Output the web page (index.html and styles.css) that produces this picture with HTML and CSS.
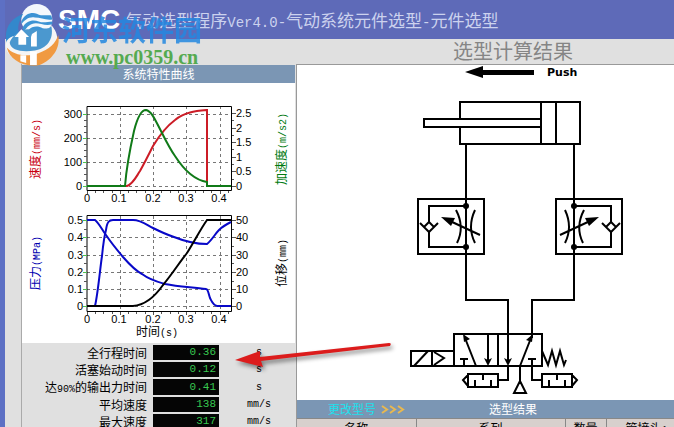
FILE: index.html
```html
<!DOCTYPE html>
<html lang="zh-CN">
<head>
<meta charset="utf-8">
<title>气动选型程序Ver4.0</title>
<link rel="stylesheet" href="styles.css">
</head>
<body>
<div class="app">
  <header class="topbar">
    <div class="brand">SMC</div>
    <h1 class="title">气动选型程序<span class="latin">Ver4.0-</span>气动系统元件选型<span class="latin">-</span>元件选型</h1>
  </header>
  <h2 class="subtitle">选型计算结果</h2>
  <main class="columns">
    <section class="curves">
      <h3 class="bar">系统特性曲线</h3>
      <svg class="charts" viewBox="22 82 273 260" width="273" height="260" role="img" aria-label="系统特性曲线">
        <g class="grid">
          <path d="M120 105V189M153 105V189M186 105V189M220 105V189M87 113H231M87 137H231M87 161H231M87 185H231"/>
          <path d="M120 215V310M153 215V310M186 215V310M220 215V310M87 219H231M87 236H231M87 254H231M87 271H231M87 288H231M87 305H231"/>
        </g>
        <path class="frame" d="M87 105.500H231.500V189.500H87ZM87 214.500H231.500V310.500H87Z"/>
        <path class="tick" d="M83 113H87M83 137H87M83 161H87M83 185H87M83 219H87M83 236H87M83 254H87M83 271H87M83 288H87M83 305H87"/>
        <path class="minor" d="M84 119H87M84 125H87M84 131H87M84 143H87M84 149H87M84 155H87M84 167H87M84 173H87M84 179H87M232 112H236M232 127H236M232 141H236M232 156H236M232 170H236M232 185H236M232 119H234M232 134H234M232 148H234M232 163H234M232 178H234M232 219H236M232 236H236M232 254H236M232 271H236M232 288H236M232 305H236M232 228H234M232 245H234M232 262H234M232 280H234M232 297H234M84 228H87M84 245H87M84 262H87M84 280H87M84 297H87"/>
        <path class="minor" d="M87 190V193M95 190V192M103 190V192M112 190V192M120 190V193M128 190V192M136 190V192M145 190V192M153 190V193M161 190V192M170 190V192M178 190V192M186 190V193M195 190V192M203 190V192M211 190V192M220 190V193M228 190V192M87 311V314M95 311V313M103 311V313M112 311V313M120 311V314M128 311V313M136 311V313M145 311V313M153 311V314M161 311V313M170 311V313M178 311V313M186 311V314M195 311V313M203 311V313M211 311V313M220 311V314M228 311V313"/>
        <path class="curve red" d="M87 185H127C133 183 136 176 140 170C145 161 149 153 153 145C159 135 167 125 175 119C184 111 196 110 207 109V185"/>
        <path class="curve green" d="M87 185H125C126 172 130 148 134 130C137 118 141 109 146 109C152 110 156 121 162 132C166 140 170 148 175 155C184 169 194 179 207 181V185H231"/>
        <path class="curve blue" d="M87 219H95C99 222 102 229 106 234C112 243 118 250 123 256C130 264 136 270 142 273C150 279 158 281 165 283C180 286 194 286 206 288C208 288 208 291 210 297C212 301 213 304 217 305H231"/>
        <path class="curve blue" d="M95 305C98 292 100 268 102 255C103 245 104 236 106 229C107 221 109 219 113 219H133C141 219 147 224 153 227C161 231 168 234 174 236C184 240 194 243 207 243C212 239 215 233 219 229C223 225 227 223 231 221"/>
        <path class="curve black" d="M87 305H133C147 304 156 294 163 284C173 272 179 262 187 252C194 241 200 229 207 219H231"/>
        <g class="num end">
          <text x="82" y="117">300</text><text x="82" y="141">200</text><text x="82" y="165">100</text><text x="82" y="189">0</text>
          <text x="83" y="223">0.5</text><text x="83" y="240">0.4</text><text x="83" y="258">0.3</text><text x="83" y="275">0.2</text><text x="83" y="292">0.1</text><text x="83" y="309">0</text>
        </g>
        <g class="num">
          <text x="236" y="116">2.5</text><text x="236" y="131">2</text><text x="236" y="145">1.5</text><text x="236" y="160">1</text><text x="236" y="174">0.5</text><text x="236" y="189">0</text>
          <text x="236" y="223">50</text><text x="236" y="240">40</text><text x="236" y="258">30</text><text x="236" y="275">20</text><text x="236" y="292">10</text><text x="236" y="309">0</text>
        </g>
        <g class="num mid">
          <text x="87" y="201">0</text><text x="119" y="201">0.1</text><text x="153" y="201">0.2</text><text x="186" y="201">0.3</text><text x="219" y="201">0.4</text>
          <text x="87" y="322">0</text><text x="119" y="322">0.1</text><text x="153" y="322">0.2</text><text x="186" y="322">0.3</text><text x="219" y="322">0.4</text>
        </g>
        <g class="axis mid">
          <text class="t-red" transform="translate(40 148) rotate(-90)">速度<tspan class="latin">(mm/s)</tspan></text>
          <text class="t-green" transform="translate(286 148) rotate(-90)">加速度<tspan class="latin">(m/s2)</tspan></text>
          <text class="t-blue" transform="translate(40 262) rotate(-90)">压力<tspan class="latin">(MPa)</tspan></text>
          <text transform="translate(286 262) rotate(-90)">位移<tspan class="latin">(mm)</tspan></text>
          <text x="157" y="335">时间<tspan class="latin">(s)</tspan></text>
        </g>
      </svg>
      <table class="stats">
        <tr><th scope="row">全行程时间</th><td class="value">0.36</td><td class="unit">s</td></tr>
        <tr><th scope="row">活塞始动时间</th><td class="value">0.12</td><td class="unit">s</td></tr>
        <tr><th scope="row">达<span class="latin">90%</span>的输出力时间</th><td class="value">0.41</td><td class="unit">s</td></tr>
        <tr><th scope="row">平均速度</th><td class="value">138</td><td class="unit">mm/s</td></tr>
        <tr><th scope="row">最大速度</th><td class="value">317</td><td class="unit">mm/s</td></tr>
      </table>
    </section>
    <section class="result">
      <svg class="circuit" viewBox="297 65 377 335" width="377" height="335" role="img" aria-label="气动回路图">
        <path class="solid" d="M465 72L483 66V70H534V75H483V78Z"/>
        <text class="push" x="547" y="76">Push</text>
        <path d="M460 119V102H580V144H460V127M541 102V144M556 102V144M541 119H424V127H541"/>
        <path d="M466 144V300H508V363M574 144V300H532V338"/>
        <g id="throttle">
          <path d="M418 199H484V254H418ZM466 206H429V222M429 232V247H466"/>
          <path d="M429 222L434 227L429 232L424 227ZM420 223L426 229M438 223L432 229M456 210Q465 227 457 243M475 210Q467 227 475 243M480 235L450 221"/>
          <path class="solid" d="M441 217L455 218L451 226Z"/>
          <circle class="solid" cx="466" cy="206" r="3"/><circle class="solid" cx="466" cy="247" r="3"/>
        </g>
        <use href="#throttle" transform="translate(1040 0) scale(-1 1)"/>
        <path d="M454 334H542V366H454ZM498 334V366M488 334V363M476 366L465 338M520 366L531 338M460 359H468M464 359V366M528 359H536M532 359V380H542"/>
        <path class="solid" d="M463 334L470 339L464 342ZM533 334L526 340L532 342ZM488 366L484 358L488 360L492 358ZM508 366L504 358L508 360L512 358Z"/>
        <path d="M454 351H411V366H454M432 351V366M414 366L428 351M434 352L444 358L434 365"/>
        <path d="M542 351L548 365L552 351L556 365L560 351L564 365L566 360"/>
        <path d="M508 366V380H498M468 374H498V387H468ZM475 387V380M483 374V380M491 387V380M468 375L463 380L468 386"/>
        <path d="M542 374H572V387H542ZM549 387V380M557 374V380M565 387V380M572 375L577 380L572 386M520 366V381L514 393H526L520 381"/>
      </svg>
      <div class="bar result-bar">
        <a class="change" href="#models">更改型号
          <svg class="chevrons" viewBox="0 0 24 9" width="24" height="9" aria-hidden="true"><path d="M1 1L6 4.500L1 8M9 1L14 4.500L9 8M17 1L22 4.500L17 8"/></svg>
        </a>
        <h3 class="result-title">选型结果</h3>
      </div>
      <table class="parts" id="models">
        <colgroup><col class="c-name"><col class="c-series"><col class="c-count"><col class="c-joint"></colgroup>
        <thead><tr><th>名称</th><th>系列</th><th>数量</th><th>管接头<span class="latin">1</span></th></tr></thead>
      </table>
    </section>
  </main>
  <div class="watermark">
    <svg class="orb" viewBox="0 0 64 70" width="62" height="68" aria-hidden="true">
      <circle cx="38" cy="20" r="16" fill="#f4f8fc"/>
      <path d="M6 38C6 26 13 18 24 14C18 24 17 32 22 37C15 38 10 42 8 48Q6 43 6 38Z" fill="#3388cc"/>
      <path d="M22 22C25 14 33 12 38 14C44 17 49 15 53 16L54 20C47 21 42 18 36 18C30 17 26 20 22 25ZM23 29C27 21 34 20 40 22C45 24 49 22 54 22L54 25C47 27 42 24 37 24C31 24 28 28 25 32ZM29 31C34 26 40 27 44 29C48 30 51 29 54 28C51 34 46 36 40 34Q34 31 29 31Z" fill="#3c93d4"/>
      <path d="M6 45C7 39 15 35 24 36C37 37 47 35 53 26C60 33 62 45 55 56C47 68 29 70 17 62C9 57 5 51 6 45Z" fill="#f5f5f5"/>
      <path d="M10 44C12 37 20 31 28 30C40 31 48 32 53 27C56 41 48 50 36 52C23 54 11 52 10 44Z" fill="#4b98cf"/>
      <path d="M7 49C14 57 27 59 39 55C51 51 58 44 60 36C63 49 54 62 41 67C25 70 10 62 7 49Z" fill="#f09a42"/>
      <path d="M15 38L22 30L30 38H27V46H19V38ZM33 35L38 32V48H32V38ZM31 53H38V67H31ZM21 57H27V65L21 63Z" fill="#fff"/>
    </svg>
    <div class="wm-text">
      <div class="wm-name">河东软件园</div>
      <div class="wm-url">www.pc0359.cn</div>
    </div>
  </div>
  <svg class="pointer" viewBox="0 0 160 34" width="160" height="34" aria-hidden="true">
    <path d="M1 20L26 11L26 17L155 3Q158 3 156 6L27 21L29 27Z"/>
  </svg>
</div>
</body>
</html>
```
FILE: styles.css
```css
* { box-sizing: border-box; }

body {
  margin: 0;
  overflow: hidden;
  font-family: "Noto Sans CJK SC", "Liberation Sans", sans-serif;
  font-size: 12px;
  color: #000;
}

h1, h2, h3 { margin: 0; font-weight: 400; }

.latin { font-family: "Liberation Mono", monospace; font-size: 10px; }

.app {
  position: relative;
  height: 100vh;
  overflow: hidden;
  border-left: 5px solid #5d70c4;
  background: #e0e0e0;
}

.topbar {
  display: flex;
  align-items: center;
  gap: 5px;
  height: 39px;
  padding-left: 53px;
  background: #5e6ab8;
}

.brand {
  color: #fff;
  font: bold 28px/32px "Liberation Sans", sans-serif;
}

.title {
  padding-top: 4px;
  color: #ccd2ee;
  font-size: 17px;
  line-height: 24px;
  white-space: nowrap;
}

.title .latin { font-size: 14px; }

.subtitle {
  height: 25px;
  padding-left: 448px;
  color: #858585;
  font-size: 20px;
  line-height: 23px;
  white-space: nowrap;
}

.columns {
  display: grid;
  grid-template-columns: 274px minmax(0, 1fr);
  gap: 1px;
  padding-left: 16px;
}

.curves { border-left: 1px solid #aaa; padding-top: 1px; }

.bar {
  height: 18px;
  background: #7b96b4;
  color: #fff;
  line-height: 18px;
  font-size: 12px;
  text-align: center;
}

.charts, .circuit { display: block; background: #fff; }
.charts { width: 100%; }

.grid { fill: none; stroke: #777; stroke-dasharray: 3 3; shape-rendering: crispEdges; }
.frame { fill: none; stroke: #000; }
.tick { stroke: #4fc04f; shape-rendering: crispEdges; }
.minor { stroke: #555; shape-rendering: crispEdges; }
.curve { fill: none; stroke-width: 2; }
.red { stroke: #cc1c26; }
.green { stroke: #107a18; }
.blue { stroke: #0808c8; }
.black { stroke: #000; }
.num { font-family: "Liberation Sans", sans-serif; font-size: 11px; }
.end { text-anchor: end; }
.mid { text-anchor: middle; }
.axis { font-size: 12px; }
.t-red { fill: #c80010; }
.t-green { fill: #007a10; }
.t-blue { fill: #0000b0; }

.stats {
  width: 100%;
  table-layout: fixed;
  border-collapse: separate;
  border-spacing: 0 2px;
}

.stats th, .stats td { height: 15px; padding: 0; line-height: 15px; }
.stats th { width: 131px; padding-right: 6px; font-weight: 400; text-align: right; white-space: nowrap; }
.stats .latin { line-height: 10px; }

.stats .value {
  width: 66px;
  padding-right: 3px;
  background: #050505;
  color: #38c850;
  font-family: "Liberation Mono", monospace;
  font-size: 11px;
  text-align: right;
}

.stats .unit {
  padding-left: 4px;
  font-family: "Liberation Mono", monospace;
  font-size: 10px;
  text-align: center;
}

.result {
  border-top: 1px solid #999;
  border-left: 1px solid #999;
  background: #fff;
  overflow: hidden;
}

.circuit path, .circuit circle { fill: none; stroke: #000; stroke-width: 2; }
.circuit .solid { fill: #000; stroke: none; }
.push { font: bold 11px "DejaVu Sans", sans-serif; }

.result-bar { display: flex; align-items: center; padding-left: 31px; }
.change { display: flex; align-items: center; gap: 5px; color: #20e0ec; text-decoration: none; }
.chevrons { fill: none; stroke: #e8b850; stroke-width: 2; }
.result-title { margin-left: 84px; font-size: 12px; line-height: 18px; }

.parts { width: 390px; table-layout: fixed; border-collapse: collapse; background: #d8d0cd; }
.parts th {
  height: 22px;
  padding: 0;
  border: 1px solid #888;
  border-left: 0;
  font-weight: 400;
  line-height: 18px;
  vertical-align: top;
}
.parts .latin { line-height: 10px; }
.c-name { width: 119px; }
.c-series { width: 149px; }
.c-count { width: 41px; }
.c-joint { width: 81px; }

.watermark {
  position: absolute;
  top: 0;
  left: -5px;
  display: flex;
  pointer-events: none;
}

.wm-text { padding-top: 12px; white-space: nowrap; }
.wm-name { color: #2488e0; font-size: 28px; font-weight: 700; line-height: 34px; opacity: .85; }
.wm-url { padding-left: 4px; color: #55aa50; font: bold 20px/22px "Liberation Serif", serif; }

.pointer { position: absolute; top: 340px; left: 229px; overflow: visible; pointer-events: none; }
.pointer path { fill: #dc1c1c; filter: drop-shadow(2px 3px 2px rgba(0, 0, 0, .45)); }
```
